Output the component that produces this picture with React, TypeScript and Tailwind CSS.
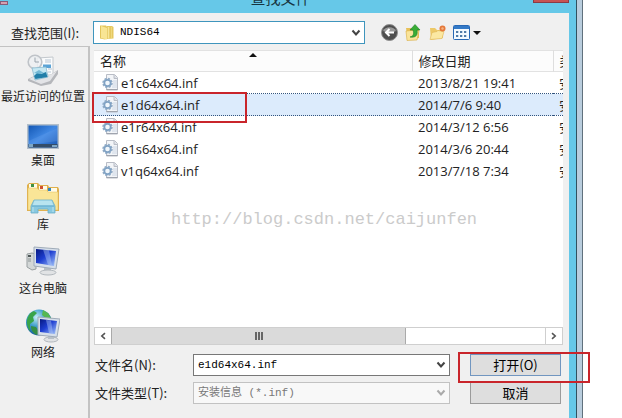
import React, { useState } from "react";

interface FileRow {
  name: string;
  modified: string;
  type: string;
}

const files: FileRow[] = [
  { name: "e1c64x64.inf", modified: "2013/8/21 19:41", type: "安装信息" },
  { name: "e1d64x64.inf", modified: "2014/7/6 9:40", type: "安装信息" },
  { name: "e1r64x64.inf", modified: "2014/3/12 6:56", type: "安装信息" },
  { name: "e1s64x64.inf", modified: "2014/3/6 20:44", type: "安装信息" },
  { name: "v1q64x64.inf", modified: "2013/7/18 7:34", type: "安装信息" },
];

const Chevron = ({ className }: { className: string }) => (
  <svg viewBox="0 0 10 8" className={className} fill="none" stroke="currentColor" strokeWidth="2">
    <path d="M1.5 1.5 5 5.5 8.5 1.5" />
  </svg>
);

const FolderIcon = () => (
  <svg viewBox="0 0 16 16" className="pointer-events-none absolute left-1.5 top-[3px] h-4 w-4">
    <path d="M1 1.500h6l1 1v12l-2 1-5-1z" fill="#e3c55c" />
    <path d="M8 2h5l1.500 1v11.500L8 15z" fill="#e5c860" />
    <path d="M2 2 8 4v11.500L2 14z" fill="#f8e594" />
    <path d="M9.500 3v11.500" stroke="#f7e69a" strokeWidth="1.500" />
    <path d="M12.500 3v11" stroke="#efd87e" />
  </svg>
);

const InfIcon = () => (
  <svg viewBox="0 0 17 17" className="h-[17px] w-[17px] shrink-0">
    <path d="M4.500.500h8l3 3v12.500h-11z" fill="#f3f5f8" stroke="#b9bdc6" />
    <path d="M12 1v3.500h3.500" fill="#d9dde4" stroke="#b9bdc6" />
    <path d="M11 7h4M11 9h4M11 11h4M10 13h5" stroke="#ccd6e4" />
    <path d="M4.500 15.500h11" stroke="#9fa4ae" />
    <circle cx="5.500" cy="9" r="4.500" fill="none" stroke="#93acc6" strokeWidth="1.500" strokeDasharray="2.200 1.300" />
    <circle cx="5.500" cy="9" r="3.200" fill="#f1f7fc" stroke="#80a2c4" strokeWidth="1.800" />
  </svg>
);

const RecentIcon = () => (
  <svg viewBox="0 0 32 32" className="h-8 w-8">
    <path d="M10 4 26 3v18H11z" fill="#fafbfc" stroke="#c3c8cd" />
    <circle cx="8" cy="8" r="6.800" fill="#eef0f2" fillOpacity=".8" stroke="#bfc3c8" strokeWidth="1.600" />
    <path d="M8 3.500V8h4" stroke="#9aa4ad" fill="none" />
    <path d="M18 6h6M18 8h6M21 15h4M21 18h3" stroke="#b7c5d3" />
    <path d="M16 10.500h8v3.500h-8z" fill="#5aa3d6" />
    <path d="m1 25 6-3 16-1 8-5v4l-7 10-10 2L1 27z" fill="#b5b7bb" />
    <path d="m2 25 6-3 15-1 7-4-7 10-9 3z" fill="#e3e4e7" />
    <path d="m5 14 14-1 2 10-13 3z" fill="#c5e8f3" stroke="#8ab9ce" strokeWidth=".8" />
    <path d="m7 22 4-4 3 2 5-2 1.500 5-12 2z" fill="#227fa9" />
    <path d="m7 19 5-3 5 3-4 1z" fill="#75bad6" />
  </svg>
);

const DesktopIcon = () => (
  <svg viewBox="0 0 32 32" className="h-8 w-8">
    <defs>
      <linearGradient id="desk" x1="0" y1="0" x2="1" y2="1">
        <stop offset="0" stopColor="#1458b5" />
        <stop offset=".5" stopColor="#4189e4" />
        <stop offset="1" stopColor="#1a56b0" />
      </linearGradient>
    </defs>
    <path d="M0 6h32v25H0z" fill="#b3bfca" />
    <path d="M1.500 7.500h29v22h-29z" fill="url(#desk)" />
    <path d="M1.500 23 30.500 10v13l-29 4z" fill="#74a9ee" fillOpacity=".25" />
    <path d="M1.500 26h29v3.500h-29z" fill="#344d69" />
    <path d="M2 26h4v3H2zM25 27h5v2h-5z" fill="#7fa7c5" />
  </svg>
);

const LibraryIcon = () => (
  <svg viewBox="0 0 34 32" className="h-8 w-[34px]">
    <path d="M1 3 3 1h9l2 2h8l1 2h9l1 2v22H1z" fill="#dfb04d" />
    <path d="M3 2h8v5H3zM13 4h8v5h-8zM22 6h9v4h-9z" fill="#fffbe9" />
    <path d="M5 2h3v3H5z" fill="#3e9145" />
    <path d="M14 4h3v3h-3z" fill="#d1502f" />
    <path d="M22 6h3v3h-3z" fill="#3387bd" />
    <path d="M2 6h9l2 2h8l1 2h10v18H2z" fill="#fae597" stroke="#e3bf60" strokeWidth=".5" />
    <path d="M5 31v-7l3-6h18l3 6v7h-7v-4H12v4z" fill="#88c8e0" stroke="#69aec9" strokeWidth=".8" />
    <path d="m8.500 18.500-2 5h21l-2-5z" fill="#b8e4ef" />
    <path d="M6 24h22" stroke="#5ea9cb" />
    <path d="M7 25v5M27 25v5" stroke="#b8e4ef" />
  </svg>
);

const ComputerIcon = () => (
  <svg viewBox="0 0 34 32" className="h-8 w-[34px]">
    <defs>
      <linearGradient id="screen" x1="0" y1="0" x2="1" y2="1">
        <stop offset="0" stopColor="#061880" />
        <stop offset=".45" stopColor="#1d3ed1" />
        <stop offset="1" stopColor="#a7c8fb" />
      </linearGradient>
    </defs>
    <path d="m1 8 5-1 4 1v15l-4 1-5-3z" fill="#d3d7d7" stroke="#999fa1" />
    <path d="M2 9h3v2H2z" fill="#4c5556" />
    <path d="M2 13h3M2 15h3" stroke="#8c9495" />
    <path d="m18 21 7 1v4h-7z" fill="#b8c0c7" />
    <ellipse cx="22" cy="26.500" rx="8" ry="2.500" fill="#e1e3e5" stroke="#b2b8bd" />
    <path d="m8 1 25 2-3 20L8 20z" fill="#d6dfea" stroke="#9fabb8" />
    <path d="m10 3 20 2-2 15-18-3z" fill="url(#screen)" />
    <path d="m17 3.500 6 .7 3 15-4-.5z" fill="#bcd4fb" fillOpacity=".4" />
  </svg>
);

const NetworkIcon = () => (
  <svg viewBox="0 0 34 34" className="h-[34px] w-[34px]">
    <defs>
      <radialGradient id="globe" cx=".4" cy=".3" r=".7">
        <stop offset="0" stopColor="#c6edf6" />
        <stop offset=".5" stopColor="#3e9dcb" />
        <stop offset="1" stopColor="#155b9b" />
      </radialGradient>
    </defs>
    <circle cx="13" cy="13.500" r="13" fill="url(#globe)" />
    <path d="M2 8c1-3 3-5 6-6l3 2-4 4 1 4-4 3v7C1 18 0 12 2 8z" fill="#39a449" />
    <path d="m17 1 5 3 3 5-4 1-5-4z" fill="#56b751" />
    <path d="m5 17 5 1 3 5-2 3c-3-1-6-4-6-9z" fill="#348e45" />
    <ellipse cx="25" cy="30.500" rx="7" ry="2.500" fill="#e1e3e5" stroke="#b2b8bd" />
    <path d="m22 24 6 1v5h-6z" fill="#b8c0c7" />
    <path d="m12 8 22 2-3 18-19-2z" fill="#d6dfea" stroke="#9fabb8" />
    <path d="m14 10 17 2-2 13-15-2z" fill="url(#screen)" />
    <path d="m20 11 5 .5 2 13-4-.5z" fill="#bcd4fb" fillOpacity=".4" />
  </svg>
);

const places = [
  { label: "最近访问的位置", icon: <RecentIcon /> },
  { label: "桌面", icon: <DesktopIcon /> },
  { label: "库", icon: <LibraryIcon /> },
  { label: "这台电脑", icon: <ComputerIcon /> },
  { label: "网络", icon: <NetworkIcon /> },
];

const Toolbar = () => (
  <div className="ml-4 flex items-center gap-[7px]">
    <button aria-label="后退">
      <svg viewBox="0 0 17 17" className="h-[17px] w-[17px]">
        <circle cx="8.500" cy="8.500" r="8" fill="#4f4f4f" stroke="#8f8f8f" />
        <path d="M2 7a7 6 0 0 1 13 0q-6 3-13 0z" fill="#999" />
        <path d="M13 8.500H5M8.500 5 5 8.500 8.500 12" fill="none" stroke="#fff" strokeWidth="2" />
      </svg>
    </button>
    <button aria-label="向上一级">
      <svg viewBox="0 0 17 17" className="h-[17px] w-[17px]">
        <path d="M1 4h5l2 2h6v8L3 16z" fill="#e8c159" />
        <path d="m1 7 10-1 3 1-2 9-10 .500z" fill="#fae49a" stroke="#d9ac41" strokeWidth=".6" />
        <path d="M5 13c4-1 4-4 3-7H5l5-5.500L15 6h-3c1 5-1 8-7 7z" fill="#38ad36" stroke="#207d28" strokeWidth=".6" />
      </svg>
    </button>
    <button aria-label="新建文件夹">
      <svg viewBox="0 0 17 17" className="h-[17px] w-[17px]">
        <path d="M1 4h5l2 2h6v8L2 16z" fill="#edc968" />
        <path d="m1 15.500 2-7 5-1 1-1 6 1-2 7z" fill="#fbe8a2" stroke="#dfb654" strokeWidth=".6" />
        <circle cx="13.500" cy="4.500" r="3" fill="#e5783a" />
        <circle cx="13.500" cy="4.500" r="1.200" fill="#f6b584" />
      </svg>
    </button>
    <button aria-label="查看" className="flex items-center gap-[3px]">
      <svg viewBox="0 0 17 15" className="h-[15px] w-[17px]">
        <rect x=".5" y=".5" width="16" height="14" rx="1" fill="#f4faff" stroke="#2768b5" />
        <path d="M1 1h15v3H1z" fill="#347ac7" />
        <path d="M3 6h2v2H3zM7 6h2v2H7zM11 6h2v2h-2zM3 10h2v2H3zM7 10h2v2H7zM11 10h2v2h-2z" fill="#517ca8" />
        <path d="M5 7h1M9 7h1M13 7h1M5 11h1M9 11h1M13 11h1" stroke="#9cb6d1" />
      </svg>
      <svg viewBox="0 0 8 4" className="h-1 w-2">
        <path d="M0 0h8L4 4z" fill="#111" />
      </svg>
    </button>
  </div>
);

const App = () => {
  const [fileName, setFileName] = useState("e1d64x64.inf");
  const [selected, setSelected] = useState("e1d64x64.inf");

  return (
    <div className="flex min-h-screen bg-white pr-[39px] font-['Noto_Sans_CJK_SC',sans-serif] text-[13px] text-[#222]">
      <div className="flex min-w-0 flex-1 border-r border-[#60717d] bg-[#b9cddd] pr-[5px]">
        <div className="flex min-w-0 flex-1 flex-col border-r border-[#31515f] bg-[#66c8e8] pr-[7px]">
          {/* Title bar */}
          <header className="flex h-[13px] items-end overflow-hidden">
            <span className="mb-2 block h-1 w-2 shrink-0 border border-[#855c78] bg-[#d5a0b0]" />
            <h1 className="mb-[5px] flex-1 pl-5 text-center text-[15px] leading-5 text-[#173440]">查找文件</h1>
            <button aria-label="关闭" className="mb-[10px] h-5 w-9 shrink-0 border border-[#8b3b45] bg-[#c75353]" />
          </header>

          <div className="flex flex-1 flex-col bg-[#f0f0f0] pt-2">
            {/* Look-in row */}
            <div className="flex h-[23px] items-center">
              <label htmlFor="lookin" className="w-[93px] shrink-0 pl-[11px] leading-5">
                查找范围(I):
              </label>
              <div className="relative min-w-0 flex-1">
                <select
                  id="lookin"
                  className="block h-[23px] w-full appearance-none border border-[#3f95bd] bg-white pl-[26px] font-['Liberation_Mono','Noto_Sans_CJK_SC',monospace] text-[11px] text-black"
                >
                  <option>NDIS64</option>
                </select>
                <FolderIcon />
                <Chevron className="pointer-events-none absolute right-1 top-2 h-2 w-[10px] text-[#444]" />
              </div>
              <div className="w-[204px] shrink-0">
                <Toolbar />
              </div>
            </div>

            <div className="mt-0.5 flex flex-1">
              {/* Places */}
              <nav className="w-[90px] shrink-0 border-r-2 border-t border-[#c3c3c3] pr-0.5 pt-[7px] text-xs">
                {places.map((place) => (
                  <button key={place.label} className="flex h-16 w-full flex-col items-center">
                    <span className="flex h-8 items-center">{place.icon}</span>
                    <span className="whitespace-nowrap leading-5">{place.label}</span>
                  </button>
                ))}
              </nav>

              <div className="flex min-w-0 flex-1 flex-col pb-3.5 pl-1 pr-[6px] pt-1">
                {/* File list */}
                <div className="relative flex flex-1 flex-col bg-white">
                  <div className="flex-1 overflow-hidden">
                    <table className="w-full table-fixed border-collapse text-left">
                      <colgroup>
                        <col />
                        <col className="w-[141px]" />
                        <col className="w-[10px]" />
                      </colgroup>
                      <thead>
                        <tr className="h-[21px] border-b border-t border-[#e2e2e2] bg-[#fcfcfc]">
                          <th className="relative border-r border-[#dedede] p-0 pl-1.5 font-normal leading-5">
                            名称
                            <svg viewBox="0 0 8 4" className="absolute left-1/2 top-0.5 -ml-1 h-1 w-2">
                              <path d="M0 4h8L4 0z" fill="#111" />
                            </svg>
                          </th>
                          <th className="border-r border-[#dedede] p-0 pl-1.5 font-normal leading-5">修改日期</th>
                          <th className="overflow-hidden whitespace-nowrap p-0 pl-1.5 font-normal leading-5">类型</th>
                        </tr>
                      </thead>
                      <tbody className="font-['Open_Sans','Noto_Sans_CJK_SC',sans-serif]">
                        {files.map((file) => (
                          <tr
                            key={file.name}
                            onClick={() => {
                              setSelected(file.name);
                              setFileName(file.name);
                            }}
                            className={
                              file.name === selected
                                ? "h-[22px] border-y border-dotted border-[#33557f] bg-[#dcebfc]"
                                : "h-[22px]"
                            }
                          >
                            <td className="p-0 pl-2 leading-5">
                              <span className="flex items-center gap-0.5">
                                <InfIcon />
                                {file.name}
                              </span>
                            </td>
                            <td className="p-0 pl-1.5 leading-5">{file.modified}</td>
                            <td className="overflow-hidden whitespace-nowrap p-0 pl-1.5 leading-5">{file.type}</td>
                          </tr>
                        ))}
                      </tbody>
                    </table>
                    <p className="mt-[26px] pl-[77px] font-['Liberation_Mono',monospace] text-[17px] leading-6 text-[#cbcbcb]">
                      http://blog.csdn.net/caijunfen
                    </p>
                  </div>
                  <div className="pointer-events-none absolute -left-0.5 top-[42px] h-[31px] w-[155px] border-2 border-[#c9252b]" />

                  {/* Horizontal scrollbar */}
                  <div className="flex h-[18px] border border-[#cfcfcf] text-[#555]">
                    <button aria-label="向左滚动" className="flex w-4 items-center justify-center">
                      <Chevron className="h-2 w-2 rotate-90" />
                    </button>
                    <div className="flex flex-1">
                      <div className="flex w-[68%] items-center justify-center gap-px border-x border-[#aaa] bg-[#dadada]">
                        <span className="h-2 w-0.5 bg-[#666]" />
                        <span className="h-2 w-0.5 bg-[#666]" />
                        <span className="h-2 w-0.5 bg-[#666]" />
                      </div>
                    </div>
                    <button aria-label="向右滚动" className="flex w-[17px] items-center justify-center border-l border-[#cfcfcf]">
                      <Chevron className="h-2 w-2 -rotate-90" />
                    </button>
                  </div>
                </div>

                {/* File name / type and actions */}
                <div className="mt-[9px] flex gap-5 pr-0.5">
                  <div className="grid min-w-0 flex-1 grid-cols-[99px_1fr] items-center gap-y-1.5">
                    <label htmlFor="filename" className="pl-px leading-5">
                      文件名(N):
                    </label>
                    <div className="relative">
                      <input
                        id="filename"
                        value={fileName}
                        onChange={(e) => setFileName(e.target.value)}
                        className="block h-[22px] w-full border border-[#777] bg-white pl-1 pr-5 font-['Liberation_Mono',monospace] text-[11px] text-black"
                      />
                      <Chevron className="pointer-events-none absolute right-1 top-[7px] h-2 w-[10px] text-[#444]" />
                    </div>
                    <label htmlFor="filetype" className="pl-px leading-5">
                      文件类型(T):
                    </label>
                    <div className="relative">
                      <select
                        id="filetype"
                        disabled
                        className="block h-[22px] w-full appearance-none border border-[#c2c2c2] bg-[#f8f8f8] pl-1 font-['Liberation_Mono','Noto_Sans_CJK_SC',monospace] text-[11px] text-[#777] opacity-100"
                      >
                        <option>安装信息 (*.inf)</option>
                      </select>
                      <Chevron className="pointer-events-none absolute right-1 top-[7px] h-2 w-[10px] text-[#aaa]" />
                    </div>
                  </div>
                  <div className="relative flex w-[91px] shrink-0 flex-col gap-1.5">
                    <button className="h-[22px] border border-[#7196c0] bg-[#dedede] leading-5 text-black">打开(O)</button>
                    <button className="h-[22px] border border-[#9b9b9b] bg-[#dedede] leading-5 text-black">取消</button>
                    <div className="pointer-events-none absolute -left-3 -top-0.5 h-[31px] w-[132px] border-2 border-[#c9252b]" />
                  </div>
                </div>
              </div>
            </div>
          </div>
        </div>
      </div>
    </div>
  );
};

export default App;
